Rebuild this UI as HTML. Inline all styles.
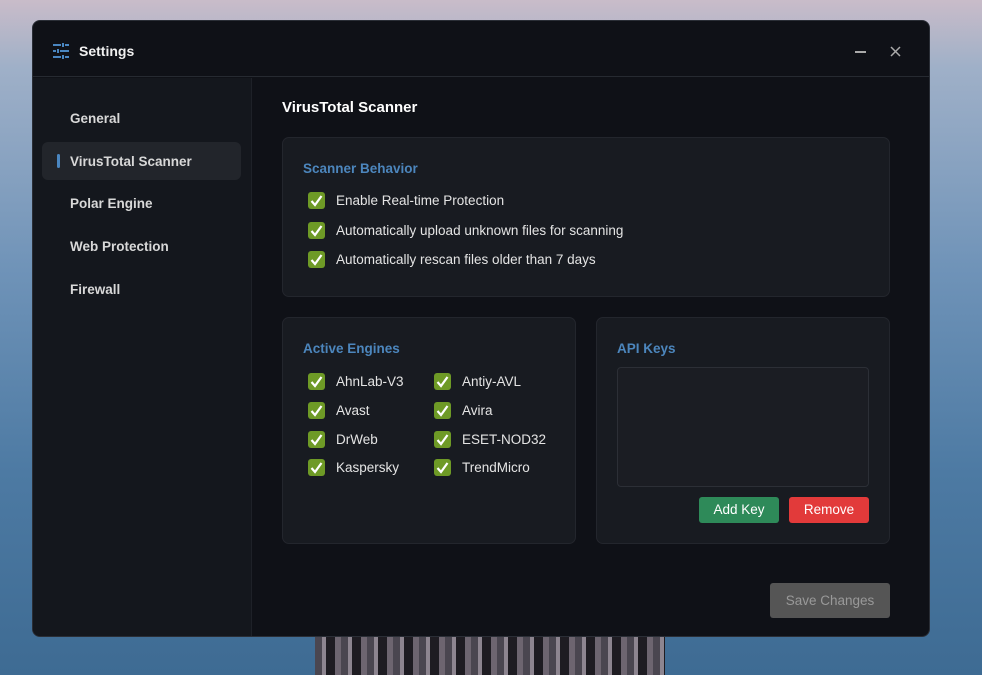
<!DOCTYPE html>
<html><head><meta charset="utf-8"><style>
*{box-sizing:border-box;margin:0;padding:0}
body{width:982px;height:675px;overflow:hidden;position:relative;font-family:"Liberation Sans",sans-serif;
background:linear-gradient(180deg,#c9bcc9 0%,#9fb0c8 10%,#6f93b8 40%,#4d7aa3 70%,#3e6b93 100%)}
.pier{position:absolute;left:315px;top:630px;width:350px;height:45px;background:repeating-linear-gradient(90deg,#4a4650 0 7px,#8d8590 7px 11px,#1e1c22 11px 20px,#6d6570 20px 26px)}
.win{position:absolute;left:32px;top:20px;width:898px;height:617px;background:#0f1117;border-radius:8px;border:1px solid #2a2e36;overflow:hidden}
.title{position:absolute;left:0;top:0;width:100%;height:56px;border-bottom:1px solid #262a31}
.title span{position:absolute;left:46px;top:22px;color:#f0f0f0;font-size:14px;font-weight:bold}
.side{position:absolute;left:0;top:57px;width:219px;height:560px;background:#14171d;border-right:1px solid #1e2128}
.nav{position:absolute;left:37px;color:#d8d8d8;font-size:13.5px;font-weight:bold}
.sel{position:absolute;left:9px;top:64px;width:199px;height:38px;background:#22252b;border-radius:6px}
.sel i{position:absolute;left:15px;top:12px;width:3px;height:14px;background:#4a86c0;border-radius:2px}
.h{position:absolute;color:#fff;font-size:15px;font-weight:bold}
.card{position:absolute;background:#181b21;border:1px solid #23262d;border-radius:7px}
.ct{position:absolute;color:#4c86bd;font-size:13.5px;font-weight:bold}
.cb{position:absolute;width:17px;height:17px;background:#6e9a26;border-radius:3px}
.cb svg{position:absolute;left:1px;top:1px}
.t{position:absolute;color:#e4e4e4;font-size:13.5px}
.btn{position:absolute;height:26px;border-radius:3px;color:#fff;font-size:13.5px;text-align:center;line-height:26px}
</style></head><body>
<div class="pier"></div>
<div class="win">
 <div class="title">
  <svg style="position:absolute;left:19px;top:22px" width="18" height="16" viewBox="0 0 18 16" stroke="#4a86c0" stroke-width="2" fill="none">
   <path d="M1 2h8M13 2h4M11 0v4M1 8h3M8 8h9M6 6v4M1 14h8M13 14h4M11 12v4"/></svg>
  <span>Settings</span>
  <div style="position:absolute;left:822px;top:30px;width:11px;height:1.5px;background:#aaa"></div>
  <svg style="position:absolute;left:857px;top:25px" width="11" height="11" stroke="#aaa" stroke-width="1.5"><path d="M1 1L10 10M10 1L1 10"/></svg>
 </div>
 <div class="side">
  <div class="sel"><i></i></div>
  <div class="nav" style="top:33px">General</div>
  <div class="nav" style="top:76px">VirusTotal Scanner</div>
  <div class="nav" style="top:118px">Polar Engine</div>
  <div class="nav" style="top:161px">Web Protection</div>
  <div class="nav" style="top:204px">Firewall</div>
 </div>
 <div class="h" style="left:249px;top:78px">VirusTotal Scanner</div>
 <div class="card" style="left:249px;top:116px;width:608px;height:160px">
  <div class="ct" style="left:20px;top:23px">Scanner Behavior</div>
 </div>
 <div class="card" style="left:249px;top:296px;width:294px;height:227px">
  <div class="ct" style="left:20px;top:23px">Active Engines</div>
 </div>
 <div class="card" style="left:563px;top:296px;width:294px;height:227px">
  <div class="ct" style="left:20px;top:23px">API Keys</div>
  <div style="position:absolute;left:20px;top:49px;width:252px;height:120px;border:1px solid #2c2f36;border-radius:4px;background:#1b1d23"></div>
  <div class="btn" style="left:102px;top:179px;width:80px;background:#2e8a59">Add Key</div>
  <div class="btn" style="left:192px;top:179px;width:80px;background:#e23a3a">Remove</div>
 </div>
 <div class="btn" style="left:737px;top:562px;width:120px;height:35px;line-height:35px;background:#555;color:#999;border-radius:3px">Save Changes</div>
</div>
<div id="cbs"></div>
<script>
var items=[[308,192,"Enable Real-time Protection"],[308,222,"Automatically upload unknown files for scanning"],[308,251,"Automatically rescan files older than 7 days"],
[308,373,"AhnLab-V3"],[434,373,"Antiy-AVL"],[308,402,"Avast"],[434,402,"Avira"],[308,431,"DrWeb"],[434,431,"ESET-NOD32"],[308,459,"Kaspersky"],[434,459,"TrendMicro"]];
var h="";items.forEach(function(a){h+='<div class="cb" style="left:'+a[0]+'px;top:'+a[1]+'px"><svg width="15" height="15"><path d="M2.5 8l3.5 4 6.5-9" stroke="#fff" stroke-width="2.2" fill="none"/></svg></div><div class="t" style="left:'+(a[0]+28)+'px;top:'+(a[1]+1)+'px">'+a[2]+'</div>';});
document.getElementById("cbs").innerHTML=h;
</script>
</body></html>
